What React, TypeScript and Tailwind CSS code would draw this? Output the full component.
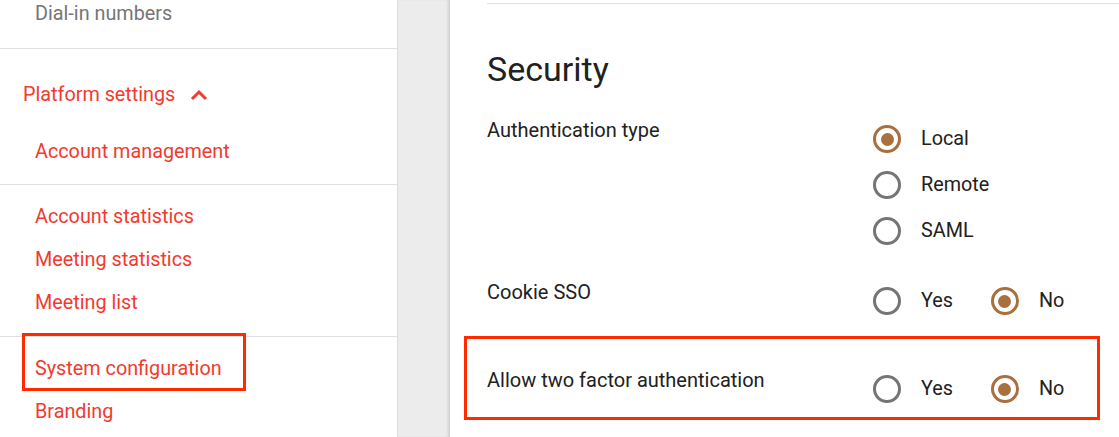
import { ReactNode } from "react";

const font = { fontFamily: "Roboto, 'Liberation Sans', sans-serif" };

const NavItem = ({ children, muted, className = "" }: { children: ReactNode; muted?: boolean; className?: string }) => (
  <div
    className={`h-[43px] flex items-center pl-[35px] text-[19.8px] ${
      muted ? "text-[#757575]" : "text-[#f23a2e]"
    } ${className}`}
  >
    {children}
  </div>
);

const Radio = ({ checked, label }: { checked?: boolean; label: string }) => (
  <div className="h-[46px] flex items-center">
    <span
      className={`w-[28px] h-[28px] rounded-full border-[3px] flex items-center justify-center ${
        checked ? "border-[#a96f3f]" : "border-[#757575]"
      }`}
    >
      {checked && <span className="w-[13px] h-[13px] rounded-full bg-[#a96f3f]" />}
    </span>
    <span className="ml-[20px] text-[19.8px] text-[#212121]">{label}</span>
  </div>
);

const Setting = ({ label, children, className = "" }: { label: string; children: ReactNode; className?: string }) => (
  <div className={`flex ${className}`}>
    <div className="w-[386px] leading-[28px] text-[20px] text-[#212121]">{label}</div>
    {children}
  </div>
);

export default function App() {
  return (
    <div className="flex h-[437px] w-[1119px] overflow-hidden bg-white" style={font}>
      {/* sidebar */}
      <aside className="relative w-[398px] shrink-0 border-r border-[#dcdcdc]">
        <div className="-mt-[8px] pb-[13px] border-b border-[#e0e0e0]">
          <NavItem muted>Dial-in numbers</NavItem>
        </div>
        <div className="pt-[18px] pb-[11px] border-b border-[#e0e0e0]">
          <div className="h-[56px] flex items-center pl-[23px] text-[19.8px] text-[#f23a2e]">
            Platform settings
            <svg className="ml-[15px]" width="18" height="12" viewBox="0 0 18 12" fill="none">
              <path d="M2 10 L9 3 L16 10" stroke="#f23a2e" strokeWidth="3" />
            </svg>
          </div>
          <NavItem className="mt-[7px]">Account management</NavItem>
        </div>
        <div className="pt-[10px] pb-[12px] border-b border-[#e0e0e0]">
          <NavItem>Account statistics</NavItem>
          <NavItem>Meeting statistics</NavItem>
          <NavItem>Meeting list</NavItem>
        </div>
        <div className="pt-[10px]">
          <NavItem>System configuration</NavItem>
          <NavItem>Branding</NavItem>
        </div>
        <div className="absolute left-[22px] top-[333px] w-[224px] h-[58px] border-[3px] border-[#ff2a00]" />
      </aside>

      {/* gutter */}
      <div className="w-[52px] shrink-0 bg-[#ececec] shadow-[inset_-3px_0_3px_-1px_rgba(0,0,0,0.12)]" />

      {/* content */}
      <main className="relative flex-1 pl-[37px]">
        <div className="mt-[3px] border-t border-[#e0e0e0]" />
        <h1 className="mt-[45px] text-[34px] leading-[40px] text-[#212121]">Security</h1>
        <Setting label="Authentication type" className="mt-[27px]">
          <div className="flex flex-col">
            <Radio checked label="Local" />
            <Radio label="Remote" />
            <Radio label="SAML" />
          </div>
        </Setting>
        <Setting label="Cookie SSO" className="mt-[24px]">
          <div className="flex gap-[38px]">
            <Radio label="Yes" />
            <Radio checked label="No" />
          </div>
        </Setting>
        <Setting label="Allow two factor authentication" className="mt-[42px]">
          <div className="flex gap-[38px]">
            <Radio label="Yes" />
            <Radio checked label="No" />
          </div>
        </Setting>
        <div className="absolute left-[14px] top-[336px] w-[636px] h-[84px] border-[3px] border-[#ff2a00]" />
      </main>
    </div>
  );
}
